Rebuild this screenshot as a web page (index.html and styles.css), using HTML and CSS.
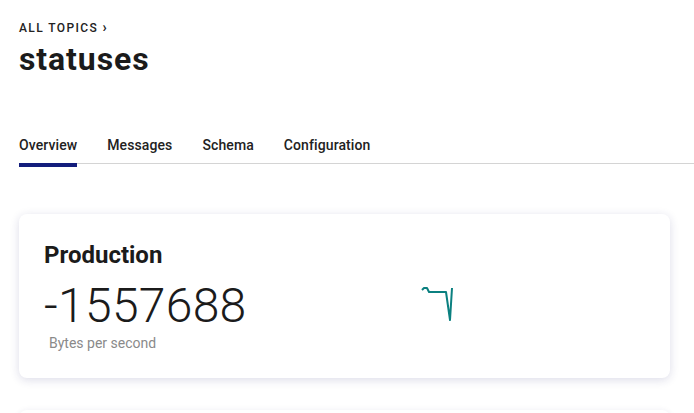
FILE: index.html
```html
<!DOCTYPE html>
<html>
<head>
<meta charset="utf-8">
<link rel="stylesheet" href="styles.css">
</head>
<body>
<div class="page">
  <div class="crumb">ALL TOPICS <span class="chev">›</span></div>
  <h1 class="title">statuses</h1>
  <nav class="tabs">
    <a class="tab active">Overview</a>
    <a class="tab">Messages</a>
    <a class="tab">Schema</a>
    <a class="tab">Configuration</a>
  </nav>
  <section class="card">
    <div class="card-title">Production</div>
    <div class="metric">-1557688</div>
    <svg class="spark" width="36" height="36" viewBox="0 0 36 36">
      <polyline points="2,4 4,2 7,2 9,6 26,6 30,34 32,2" fill="none" stroke="#0b8080" stroke-width="2" stroke-linejoin="round"/>
    </svg>
    <div class="unit">Bytes per second</div>
  </section>
  <section class="card next"></section>
</div>
</body>
</html>
```
FILE: styles.css
```css
html, body {
  margin: 0;
  background: #fff;
}
body {
  font-family: Roboto, "Liberation Sans", sans-serif;
  color: #1b1b1b;
  overflow: hidden;
}
.page {
  padding: 19px 24px 0 19px;
}
.crumb {
  height: 18px;
  font-size: 12px;
  line-height: 18px;
  font-weight: 500;
  letter-spacing: 1.4px;
  color: #222;
}
.chev {
  font-size: 14px;
  line-height: 1;
  font-weight: 700;
  letter-spacing: 0;
}
.title {
  margin: 2px 0 0;
  font-size: 32px;
  line-height: 40px;
  font-weight: 700;
  letter-spacing: 0.9px;
}
.tabs {
  display: flex;
  gap: 30px;
  margin-top: 56px;
  margin-right: -24px;
  border-bottom: 1px solid #d4d4d4;
}
.tab {
  position: relative;
  font-size: 14px;
  line-height: 20px;
  font-weight: 500;
  letter-spacing: 0.1px;
  color: #222;
  padding-bottom: 8px;
}
.tab.active::after {
  content: "";
  position: absolute;
  left: 0;
  right: 0;
  bottom: -4px;
  height: 4px;
  background: #131d7c;
}
.card {
  margin-top: 50px;
  background: #fff;
  border-radius: 8px;
  box-shadow: 0 2px 10px rgba(40, 40, 110, 0.16);
  padding: 27px 25px 26px 25px;
  display: grid;
  grid-template-columns: 376px auto;
  align-items: center;
}
.card-title {
  grid-column: 1 / -1;
  font-size: 24px;
  line-height: 28px;
  font-weight: 700;
  margin-bottom: 9px;
}
.metric {
  font-size: 48px;
  line-height: 56px;
  font-weight: 300;
  letter-spacing: 0.3px;
  color: #1b1b1b;
}
.spark {
  display: block;
  margin-top: -4px;
}
.unit {
  grid-column: 1 / -1;
  font-size: 14px;
  line-height: 18px;
  color: #8a8a8a;
  padding-left: 5px;
}
.card.next {
  margin-top: 32px;
  height: 100px;
  padding: 0;
  box-shadow: 0 1px 6px rgba(40, 40, 110, 0.1);
}
```
